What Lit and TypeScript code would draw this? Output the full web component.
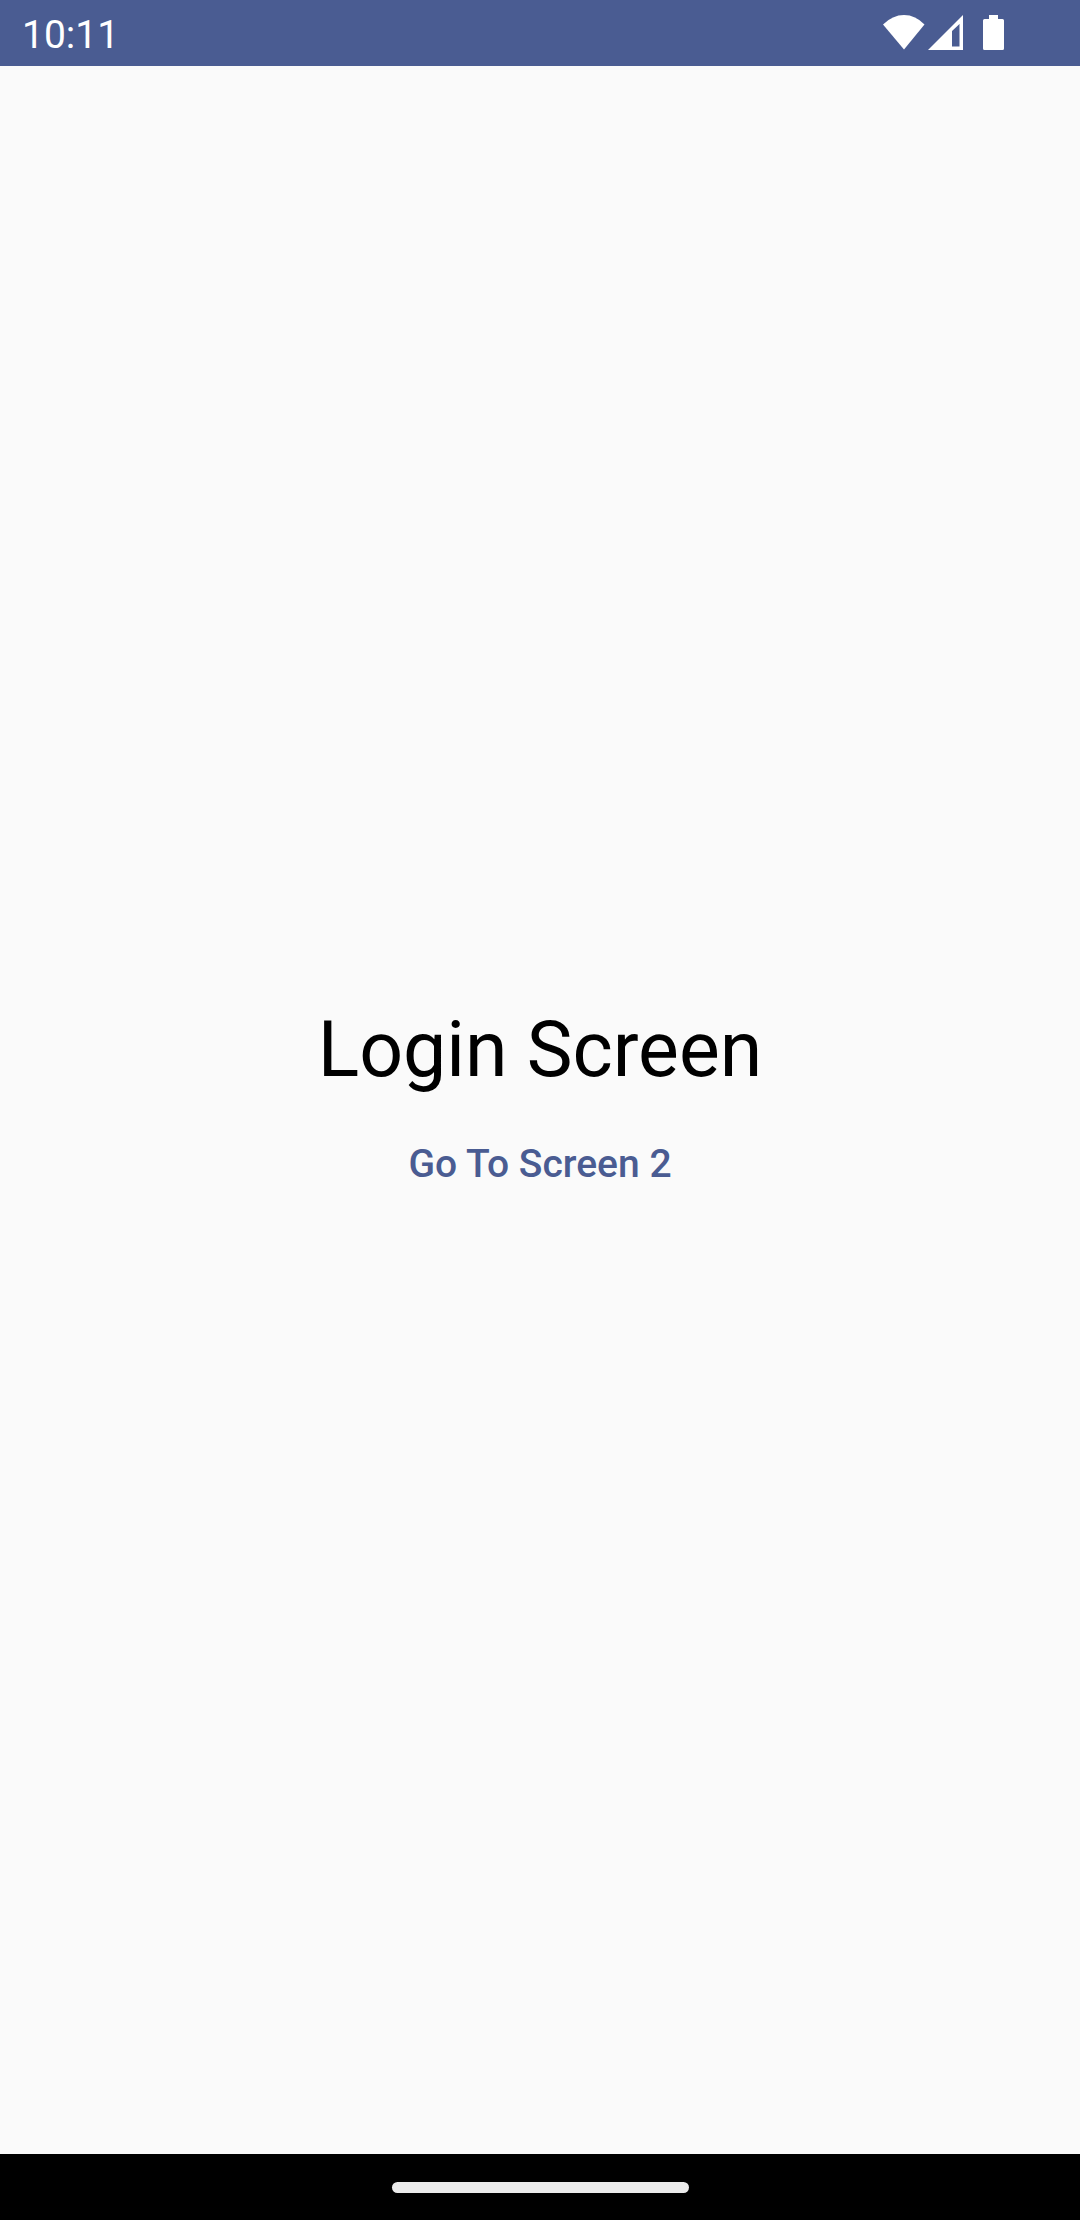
import { LitElement, html, css } from "lit";
import { customElement, property } from "lit/decorators.js";

@customElement("status-bar")
export class StatusBar extends LitElement {
  @property() time = "";

  static styles = css`
    :host {
      display: flex;
      align-items: center;
      justify-content: space-between;
      box-sizing: border-box;
      height: 66px;
      padding: 0 76px 0 22px;
      background: #4a5c92;
      color: #fff;
      font-size: 39px;
      line-height: 46px;
    }
    .time {
      padding-top: 4px;
    }
    .icons {
      display: flex;
      align-items: center;
    }
    .icon {
      display: block;
      height: 36px;
      fill: currentColor;
    }
    .cell {
      margin: 0 20px 0 3px;
    }
  `;

  render() {
    return html`
      <time class="time">${this.time}</time>
      <div class="icons">
        <svg class="icon" width="42" height="36" viewBox="0 1 42 36" role="img" aria-label="Wi-Fi">
          <path d="M0 10.500Q9.500 1 21 1T41.500 10.500L21 35.500Z" />
        </svg>
        <svg class="icon cell" width="35" height="36" viewBox="0 1 35 36" role="img" aria-label="Mobile signal">
          <path fill-rule="evenodd" d="M0 36L35 1V36ZM24 17V32.500H31.500V10Z" />
        </svg>
        <svg class="icon" width="21" height="36" viewBox="0 1 21 36" role="img" aria-label="Battery">
          <path d="M6 1H15V5H19.500Q21 5 21 6.500V34.500Q21 36 19.500 36H1.500Q0 36 0 34.500V6.500Q0 5 1.500 5H6Z" />
        </svg>
      </div>
    `;
  }
}

@customElement("app-root")
export class AppRoot extends LitElement {
  static styles = css`
    :host {
      display: flex;
      flex-direction: column;
      min-height: 100vh;
      background: #fafafa;
      font-family: Roboto, "Liberation Sans", sans-serif;
    }
    .content {
      flex: 1;
      display: flex;
      flex-direction: column;
      align-items: center;
      justify-content: center;
      gap: 14px;
      padding-top: 4px;
    }
    .title {
      margin: 0;
      color: #000;
      font-size: 77px;
      font-weight: 400;
      line-height: 90px;
    }
    .action {
      padding: 28px 32px;
      border: 0;
      border-radius: 55px;
      background: none;
      color: #4a5c92;
      font-family: inherit;
      font-size: 39px;
      font-weight: 500;
      line-height: 54px;
      cursor: pointer;
    }
    .navigation {
      display: flex;
      align-items: center;
      justify-content: center;
      height: 66px;
      background: #000;
    }
    .handle {
      width: 27.5%;
      height: 11px;
      border-radius: 6px;
      background: #ebebeb;
    }
  `;

  render() {
    return html`
      <status-bar time="10:11"></status-bar>
      <main class="content">
        <h1 class="title">Login Screen</h1>
        <button class="action" type="button">Go To Screen 2</button>
      </main>
      <div class="navigation"><div class="handle"></div></div>
    `;
  }
}
